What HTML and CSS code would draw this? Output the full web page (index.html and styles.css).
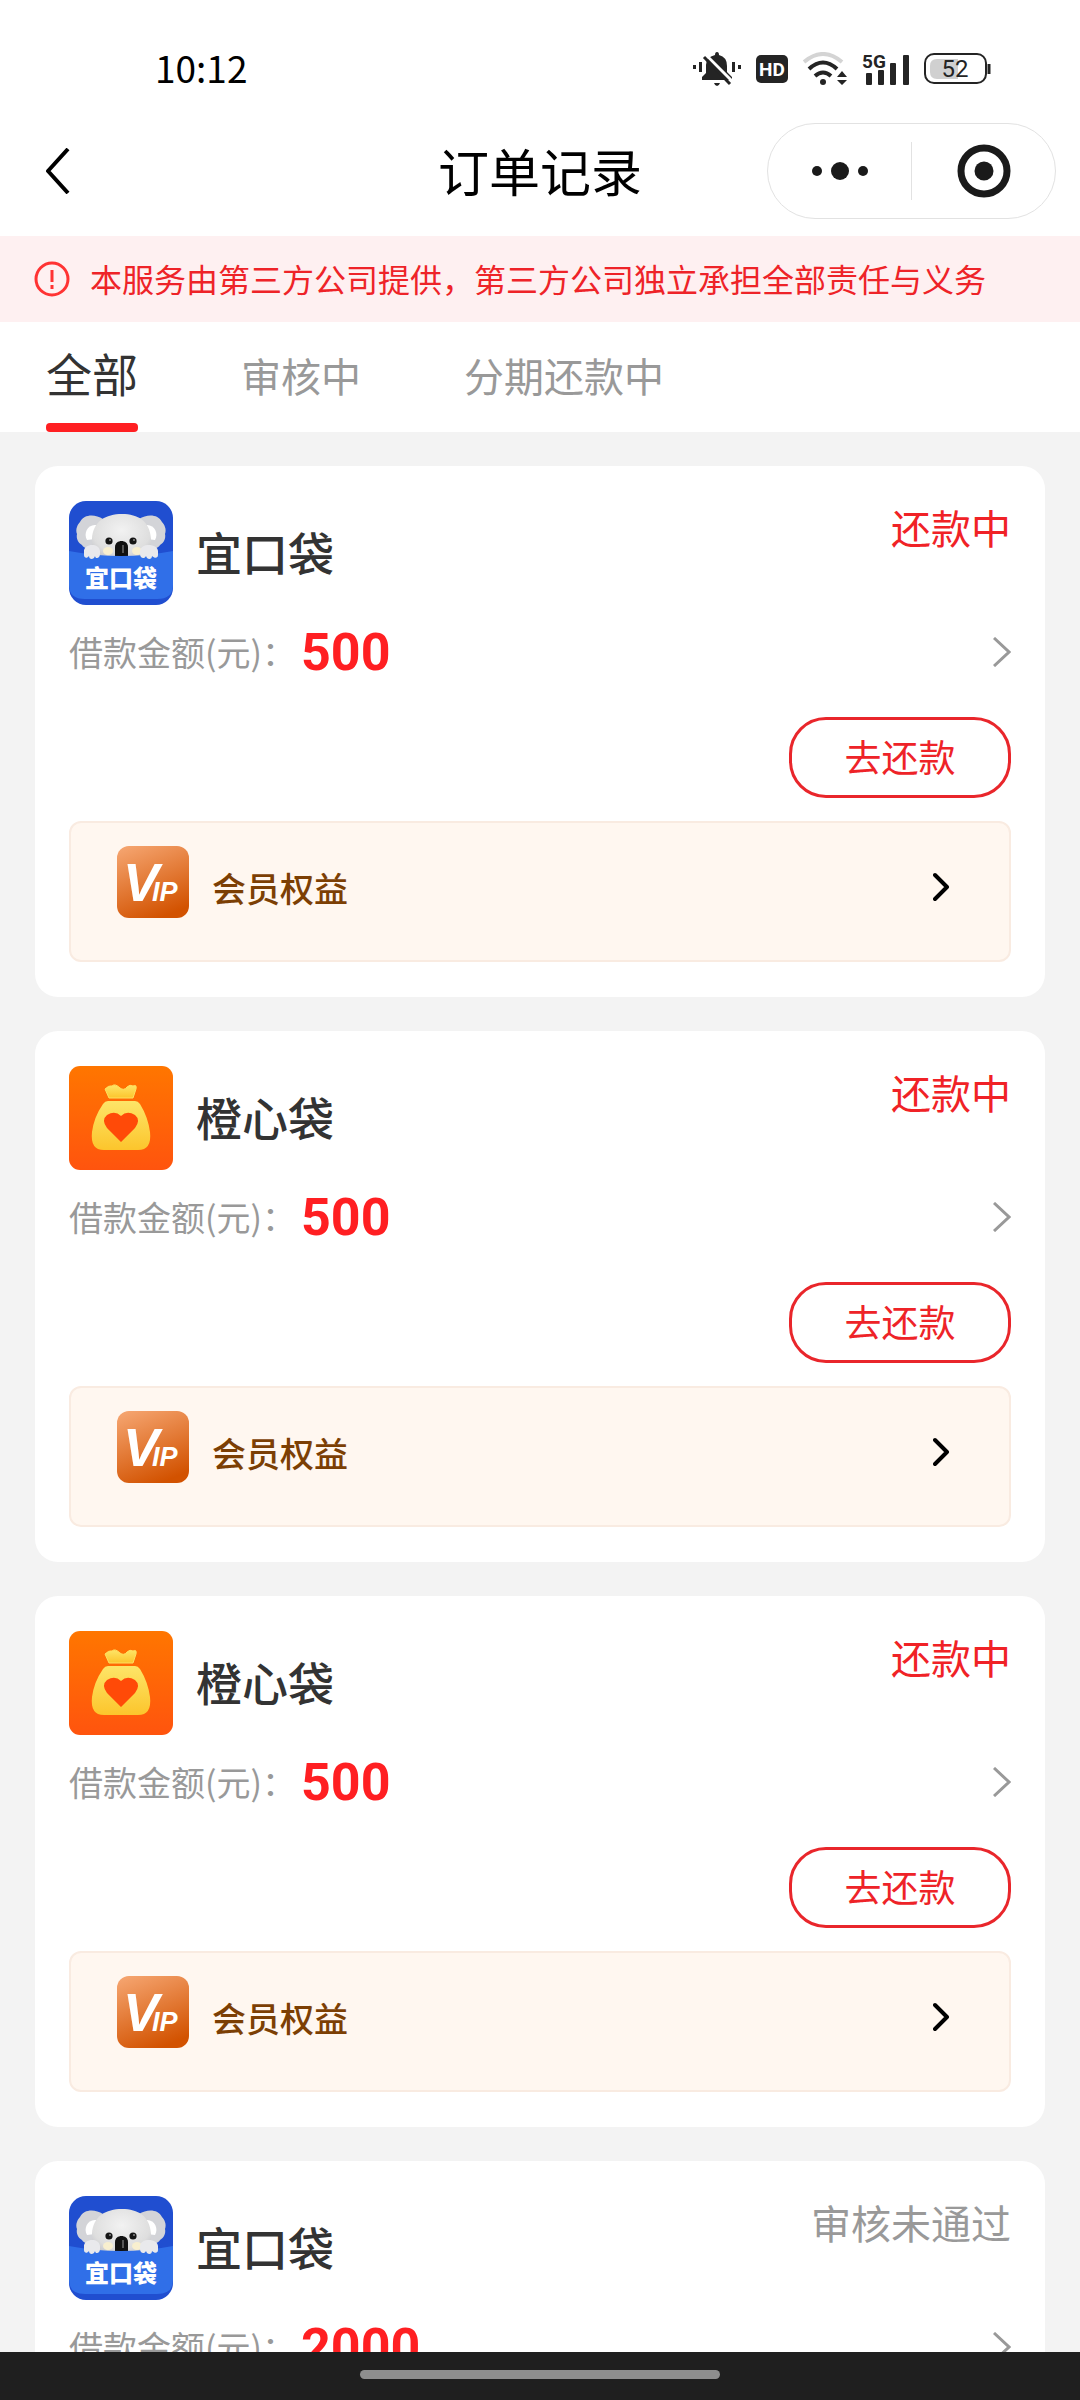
FILE: index.html
```
<!DOCTYPE html>
<html lang="zh-CN">
<head>
<meta charset="utf-8">
<meta name="viewport" content="width=device-width, initial-scale=1">
<title>订单记录</title>
<link rel="stylesheet" href="styles.css">
</head>
<body>
<svg class="sprite" aria-hidden="true">
  <defs>
    <linearGradient id="orange" x1="0" y1="0" x2="0" y2="1"><stop offset="0" stop-color="#ff7600"/><stop offset="1" stop-color="#ff540e"/></linearGradient>
    <linearGradient id="gold" x1="0" y1="0" x2="0" y2="1"><stop offset="0" stop-color="#fde568"/><stop offset="1" stop-color="#fcc52c"/></linearGradient>
    <linearGradient id="copper" x1="0.2" y1="0" x2="0.6" y2="1"><stop offset="0" stop-color="#f4a26c"/><stop offset="1" stop-color="#d25200"/></linearGradient>
    <radialGradient id="fur" cx="0.5" cy="0.35" r="0.7"><stop offset="0" stop-color="#f2f2f2"/><stop offset="0.7" stop-color="#dedede"/><stop offset="1" stop-color="#bfc0c6"/></radialGradient>
    <clipPath id="tile"><rect width="104" height="104" rx="17"/></clipPath>
  </defs>
  <symbol id="logo-koala" viewBox="0 0 104 104">
    <g clip-path="url(#tile)">
      <rect width="104" height="104" fill="#204ed0"/>
      <path d="M8 33C6 28 9 23 11 21C15 13 26 13 34 18L34 46C25 51 15 48 13 44C9 42 7 37 8 33Z" fill="#d3d4d8"/>
      <path d="M96 33C98 28 95 23 93 21C89 13 78 13 70 18L70 46C79 51 89 48 91 44C95 42 97 37 96 33Z" fill="#d3d4d8"/>
      <path d="M18 39C14 32 19 23 27 24L26 38Z" fill="#fff"/>
      <path d="M86 39C90 32 85 23 77 24L78 38Z" fill="#fff"/>
      <path d="M23 38C24 20 37 13 53 13C69 13 81 20 82 38C83 47 80 56 74 60H32C26 56 22 47 23 38Z" fill="url(#fur)"/>
      <ellipse cx="39" cy="50" rx="5" ry="4" fill="#f8efcf"/><ellipse cx="68" cy="50" rx="5" ry="4" fill="#f8efcf"/>
      <circle cx="40" cy="40" r="3.6" fill="#151515"/><circle cx="64" cy="40" r="3.6" fill="#151515"/>
      <circle cx="41" cy="39" r="1" fill="#888"/><circle cx="65" cy="39" r="1" fill="#888"/>
      <path d="M46 57V46C46 38 59 38 59 46V57Z" fill="#111"/><path d="M54 44V52" stroke="#555" stroke-width="2"/>
      <path d="M0 50Q52 60 104 50V84Q104 98 88 98H16Q0 98 0 84Z" fill="#306fe8"/>
      <path d="M15 51C14 43 30 41 31 50V53C31 58 26 58 26 55C25 59 20 59 20 55C18 58 15 57 15 54Z" fill="#e9e9ec"/>
      <path d="M89 51C90 43 72 41 71 50V53C71 58 76 58 77 55C78 59 83 59 83 55C86 58 89 57 89 54Z" fill="#e9e9ec"/>
      <text x="52" y="86" class="koala-text">宜口袋</text>
    </g>
  </symbol>
  <symbol id="logo-bag" viewBox="0 0 104 104">
    <rect width="104" height="104" rx="11" fill="url(#orange)"/>
    <path d="M36 23Q40 19 43 20Q46 17 51 22Q55 25 58 21Q61 18 64 20Q68 18 67 23L64 32H40Z" fill="url(#gold)" stroke="#fde060" stroke-linejoin="round"/>
    <path d="M39 35H66Q69 35 71 38Q79 51 81 66Q83 84 69 84H35Q21 84 23 66Q25 51 34 38Q36 35 39 35Z" fill="url(#gold)"/>
    <path d="M52 76L38 62Q32 54 38 49Q46 44 52 50Q58 44 66 49Q72 54 66 62Z" fill="#ff4a08"/>
  </symbol>
  <symbol id="logo-vip" viewBox="0 0 72 72">
    <rect width="72" height="72" rx="12" fill="url(#copper)"/>
    <text x="6" y="55" class="vip-v">V</text>
    <text x="35" y="55" class="vip-ip">IP</text>
  </symbol>
  <symbol id="chevron" viewBox="0 0 18 30"><path d="M1 1L16 15L1 29" fill="none" stroke="#999" stroke-width="3"/></symbol>
  <symbol id="chevron-bold" viewBox="0 0 30 72"><path d="M2 29L14 41L2 53" fill="none" stroke="#000" stroke-width="4" stroke-linecap="round" stroke-linejoin="round"/></symbol>
</svg>

<div class="app">
  <div class="statusbar">
    <time class="clock">10:12</time>
    <div class="indicators">
      <svg width="48" height="34" viewBox="0 0 48 34" fill="#242424">
        <path d="M0 13h3v4H0zM6 10h3v10H6zM39 10h3v10h-3zM45 13h3v4h-3z"/>
        <path d="M24 0q2 0 2 3q8 2 8 11v6l5 5v3H9v-3l4-4v-8q0-8 9-10q0-3 2-3z"/>
        <path d="M21 31h6q-1 3-3 3t-3-3z"/>
        <path d="M13 3L40 30" stroke="#fff" stroke-width="3"/><path d="M11 5L37 32" stroke="#242424" stroke-width="3"/>
      </svg>
      <svg width="32" height="28" viewBox="0 0 32 28"><rect width="32" height="28" rx="5" fill="#242424"/><text x="16" y="21" class="hd">HD</text></svg>
      <svg width="44" height="34" viewBox="0 0 44 34" fill="none" stroke="#242424" stroke-width="4">
        <path d="M1 10Q20-6 39 10" stroke="#d4d4d4"/><path d="M6 17Q20 4 34 17"/><path d="M12 24Q20 17 28 24"/>
        <circle cx="20" cy="30" r="3" fill="#242424" stroke="none"/><path d="M39 19l5 6H34zM39 33l5-5H34z" fill="#242424" stroke="none"/>
      </svg>
      <svg width="47" height="34" viewBox="0 0 47 34" fill="#242424"><rect x="4" y="21" width="6" height="12" rx="1"/><rect x="16" y="18" width="6" height="15" rx="1"/><rect x="28" y="11" width="6" height="22" rx="1"/><rect x="41" y="3" width="6" height="30" rx="1"/><text x="0" y="16" class="net">5G</text></svg>
      <svg width="67" height="32" viewBox="0 0 67 32"><path d="M13 6H34V26H13Q6 26 6 19V13Q6 6 13 6Z" fill="#d0d0d0"/><rect x="1" y="1" width="61" height="29" rx="9" fill="none" stroke="#242424" stroke-width="2"/><path d="M65 11v10" stroke="#242424" stroke-width="3"/><text x="31" y="24" class="charge">52</text></svg>
    </div>
  </div>

  <header class="navbar">
    <button class="back" type="button" aria-label="返回"><svg width="24" height="46" viewBox="0 0 24 46" fill="none" stroke="#000" stroke-width="4" stroke-linejoin="round"><path d="M22 1L2 23L22 45"/></svg></button>
    <h1 class="title">订单记录</h1>
    <div class="capsule">
      <button type="button" aria-label="更多"><svg width="58" height="20" viewBox="0 0 58 20" fill="#1a1a1a"><circle cx="6" cy="10" r="5"/><circle cx="29" cy="10" r="9"/><circle cx="52" cy="10" r="5"/></svg></button>
      <span class="divider"></span>
      <button type="button" aria-label="关闭"><svg width="54" height="54" viewBox="0 0 54 54" fill="#1a1a1a"><circle cx="27" cy="27" r="23" fill="none" stroke="#1a1a1a" stroke-width="7"/><circle cx="27" cy="27" r="9.5"/></svg></button>
    </div>
  </header>

  <div class="notice">
    <svg width="36" height="36" viewBox="0 0 36 36" fill="none" stroke="#f33" stroke-width="3"><circle cx="18" cy="18" r="16"/><path d="M18 9v12M18 24v4"/></svg>
    <p>本服务由第三方公司提供，第三方公司独立承担全部责任与义务</p>
  </div>

  <nav class="tabs">
    <a class="tab active" href="#all">全部</a>
    <a class="tab" href="#review">审核中</a>
    <a class="tab" href="#repay">分期还款中</a>
  </nav>

  <main class="orders">
    <article class="card">
      <div class="head"><svg class="logo"><use href="#logo-koala"/></svg><h2>宜口袋</h2><span class="state">还款中</span></div>
      <a class="amount" href="#order1"><span>借款金额(元)：</span><strong>500</strong><svg class="arrow"><use href="#chevron"/></svg></a>
      <button class="repay" type="button">去还款</button>
      <a class="vip" href="#vip1"><svg class="badge"><use href="#logo-vip"/></svg><span>会员权益</span><svg class="go"><use href="#chevron-bold"/></svg></a>
    </article>
    <article class="card">
      <div class="head"><svg class="logo"><use href="#logo-bag"/></svg><h2>橙心袋</h2><span class="state">还款中</span></div>
      <a class="amount" href="#order2"><span>借款金额(元)：</span><strong>500</strong><svg class="arrow"><use href="#chevron"/></svg></a>
      <button class="repay" type="button">去还款</button>
      <a class="vip" href="#vip2"><svg class="badge"><use href="#logo-vip"/></svg><span>会员权益</span><svg class="go"><use href="#chevron-bold"/></svg></a>
    </article>
    <article class="card">
      <div class="head"><svg class="logo"><use href="#logo-bag"/></svg><h2>橙心袋</h2><span class="state">还款中</span></div>
      <a class="amount" href="#order3"><span>借款金额(元)：</span><strong>500</strong><svg class="arrow"><use href="#chevron"/></svg></a>
      <button class="repay" type="button">去还款</button>
      <a class="vip" href="#vip3"><svg class="badge"><use href="#logo-vip"/></svg><span>会员权益</span><svg class="go"><use href="#chevron-bold"/></svg></a>
    </article>
    <article class="card">
      <div class="head"><svg class="logo"><use href="#logo-koala"/></svg><h2>宜口袋</h2><span class="state rejected">审核未通过</span></div>
      <a class="amount" href="#order4"><span>借款金额(元)：</span><strong>2000</strong><svg class="arrow"><use href="#chevron"/></svg></a>
    </article>
  </main>

  <footer class="homebar"><span></span></footer>
</div>
</body>
</html>
```
FILE: styles.css
```
* { box-sizing: border-box; }
body {
  margin: 0;
  font-family: "Noto Sans CJK SC", sans-serif;
  color: #333;
  background: #f3f3f3;
}
h1, h2, p { margin: 0; font-weight: 400; }
a { color: inherit; text-decoration: none; }
button { padding: 0; border: 0; background: none; font: inherit; color: inherit; cursor: pointer; }
svg { display: block; flex: none; }
.sprite { position: absolute; width: 0; height: 0; }

.app { display: flex; flex-direction: column; height: 100vh; }

.statusbar {
  flex: none;
  display: flex;
  justify-content: space-between;
  align-items: center;
  height: 106px;
  padding: 32px 89px 0 155px;
  background: #fff;
}
.clock { padding-bottom: 4px; font-size: 37px; line-height: 40px; font-weight: 400; color: #000; }
.indicators { display: flex; align-items: center; gap: 15px; }
.hd, .net, .charge { font-family: Roboto, sans-serif; font-weight: 700; font-size: 19px; }
.hd { fill: #fff; text-anchor: middle; }
.charge { fill: #242424; text-anchor: middle; font-size: 24px; font-weight: 400; }

.navbar {
  flex: none;
  display: grid;
  grid-template-columns: 1fr auto 1fr;
  align-items: center;
  height: 130px;
  padding: 0 24px;
  background: #fff;
}
.back { justify-self: start; padding: 0 22px; }
.title { padding-bottom: 2px; font-size: 51px; line-height: 72px; color: #000; }
.capsule {
  justify-self: end;
  display: flex;
  align-items: center;
  width: 289px;
  height: 96px;
  border: 1px solid #e2e2e2;
  border-radius: 48px;
}
.capsule button { flex: 1; height: 100%; display: flex; align-items: center; justify-content: center; }
.divider { width: 1px; height: 58px; background: #e2e2e2; }

.notice {
  flex: none;
  display: flex;
  align-items: center;
  gap: 20px;
  height: 86px;
  padding: 0 34px;
  background: #fef0f1;
  color: #ee2328;
  font-size: 32px;
  line-height: 48px;
  white-space: nowrap;
}
.notice p { padding-bottom: 2px; }

.tabs {
  flex: none;
  display: flex;
  gap: 103px;
  height: 110px;
  padding: 0 46px;
  background: #fff;
}
.tab { font-size: 40px; line-height: 106px; color: #999; }
.tab.active { display: flex; flex-direction: column; font-size: 46px; line-height: 101px; color: #333; }
.tab.active::after { content: ""; height: 9px; border-radius: 4px; background: #ff1f22; }

.orders {
  flex: 1;
  min-height: 0;
  display: flex;
  flex-direction: column;
  gap: 34px;
  padding: 34px 35px;
  overflow-y: auto;
  scrollbar-width: none;
}
.card {
  flex: none;
  display: flex;
  flex-direction: column;
  padding: 35px 34px;
  border-radius: 23px;
  background: #fff;
}
.head { display: flex; align-items: center; gap: 23px; }
.logo { width: 104px; height: 104px; }
.koala-text { font-size: 24px; font-weight: 900; fill: #fff; text-anchor: middle; }
.head h2 { flex: 1; padding-bottom: 4px; font-size: 46px; line-height: 68px; font-weight: 500; }
.state { align-self: flex-start; font-size: 40px; line-height: 52px; color: #f02226; }
.state.rejected { color: #999; }

.amount { display: flex; align-items: center; gap: 5px; height: 94px; font-size: 34px; color: #999; }
.amount span { padding-bottom: 2px; }
.amount strong { flex: 1; font-family: Roboto, sans-serif; font-size: 52px; font-weight: 700; color: #ff1f22; }
.arrow { width: 18px; height: 30px; }

.repay {
  align-self: flex-end;
  width: 222px;
  height: 81px;
  margin: 18px 0 23px;
  padding-bottom: 4px;
  border: 3px solid #e9262b;
  border-radius: 37px;
  font-size: 37px;
  line-height: 56px;
  color: #ee2328;
}

.vip {
  display: flex;
  align-items: flex-end;
  gap: 23px;
  padding: 23px 46px 42px;
  border: 2px solid #f9ebe1;
  border-radius: 12px;
  background: #fff7f0;
  color: #7c3f04;
  font-size: 34px;
  line-height: 60px;
  font-weight: 500;
}
.vip span { flex: 1; }
.badge { width: 72px; height: 72px; }
.vip-v, .vip-ip { font-family: "Liberation Sans", sans-serif; font-weight: 700; font-style: italic; fill: #fff; }
.vip-v { font-size: 54px; }
.vip-ip { font-size: 27px; }
.go { width: 30px; height: 72px; }

.homebar { flex: none; display: flex; justify-content: center; align-items: center; height: 48px; padding-bottom: 3px; background: #1f1f1f; }
.homebar span { width: 33.3333%; height: 9px; border-radius: 5px; background: #8e8e8e; }
```
